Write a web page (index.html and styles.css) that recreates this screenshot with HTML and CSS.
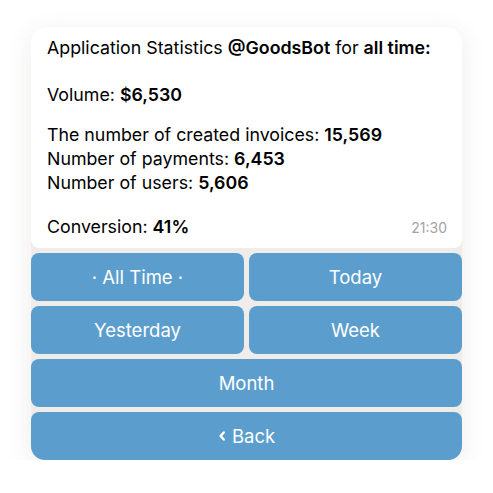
FILE: index.html
```html
<!DOCTYPE html>
<html>
<head>
<meta charset="utf-8">
<link rel="stylesheet" href="styles.css">
</head>
<body>
<div class="widget">
  <div class="message">
    <p class="line">Application Statistics <b>@GoodsBot</b> for <b>all time:</b></p>
    <p class="line gap1">Volume: <b>$6,530</b></p>
    <p class="line gap2">The number of created invoices: <b>15,569</b></p>
    <p class="line">Number of payments: <b>6,453</b></p>
    <p class="line">Number of users: <b>5,606</b></p>
    <div class="last gap3">
      <p class="line">Conversion: <b>41%</b></p>
      <span class="time">21:30</span>
    </div>
  </div>
  <div class="keyboard">
    <button class="key">· All Time ·</button>
    <button class="key">Today</button>
    <button class="key">Yesterday</button>
    <button class="key">Week</button>
    <button class="key wide">Month</button>
    <button class="key wide back"><svg class="chev" width="8" height="12" viewBox="0 0 8 12"><path d="M5.8 2.5 L2.6 6 L5.8 9.5" fill="none" stroke="#fff" stroke-width="2.4" stroke-linecap="round" stroke-linejoin="round"/></svg>Back</button>
  </div>
</div>
</body>
</html>
```

FILE: styles.css
```css
html, body {
  margin: 0;
  padding: 0;
  background: #ffffff;
}
body {
  font-family: Inter, "Noto Sans", sans-serif;
  -webkit-font-smoothing: antialiased;
}
.widget {
  margin: 27px 0 0 31px;
  width: 431px;
  background: #efecea;
  border-radius: 14px;
  box-shadow: 0 6px 26px rgba(90, 70, 60, 0.10);
  display: flex;
  flex-direction: column;
  gap: 5px;
}
.message {
  background: #ffffff;
  border-radius: 14px 14px 8px 8px;
  padding: 9px 16px 9px 16px;
  color: #000;
  font-size: 17.8px;
  line-height: 24px;
}
.line {
  margin: 0;
}
.line b {
  font-weight: 600;
}
.gap1 {
  margin-top: 23px;
}
.gap2 {
  margin-top: 16px;
}
.gap3 {
  margin-top: 20px;
}
.last {
  display: flex;
  justify-content: space-between;
  align-items: center;
}
.time {
  font-size: 14px;
  color: #a3a3a3;
  line-height: 20px;
  margin-right: -1px;
  margin-top: 2px;
}
.keyboard {
  display: grid;
  grid-template-columns: 1fr 1fr;
  gap: 5px;
}
.key {
  border: 0;
  margin: 0;
  height: 48px;
  background: #5b9ecd;
  color: #fff;
  font-family: Inter, "Noto Sans", sans-serif;
  font-size: 18.5px;
  font-weight: 400;
  border-radius: 8px;
  display: flex;
  align-items: center;
  justify-content: center;
  gap: 6px;
  padding: 0;
}
.wide {
  grid-column: span 2;
}
.back {
  border-radius: 8px 8px 14px 14px;
}
.chev {
  display: block;
}
```
